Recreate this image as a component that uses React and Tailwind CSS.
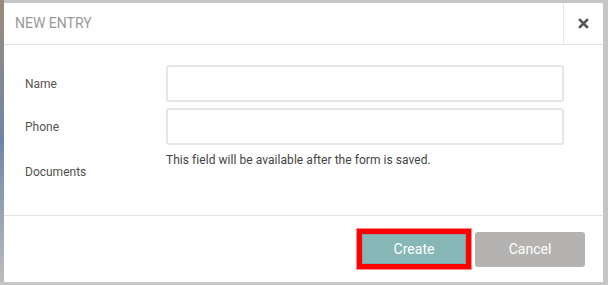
import React from "react";

const Field = ({ label }) => (
  <div className="flex items-center">
    <label className="w-[141px] shrink-0 text-[12px] text-[#555]">{label}</label>
    <input
      type="text"
      className="w-[398px] h-[37px] border-2 border-[#e6e6e6] rounded-[3px] bg-white outline-none px-2"
    />
  </div>
);

const App = () => {
  return (
    <div
      className="w-[608px] h-[285px] bg-[#c6c6c6] flex pt-[3px] overflow-hidden"
      style={{ fontFamily: "Roboto, 'Liberation Sans', sans-serif" }}
    >
      {/* sliver of the page behind the modal */}
      <div className="w-[4px] h-[282px] -mt-[3px] bg-gradient-to-b from-[#9b8a78] via-[#6d87a8] to-[#bdbdbd]" />

      <div className="w-[599px] h-[279px] bg-white flex flex-col">
        {/* header */}
        <div className="h-[42px] flex items-stretch justify-between border-b border-[#e2e2e2]">
          <h3 className="pl-[11px] flex items-center text-[14px] text-[#999]">NEW ENTRY</h3>
          <button className="w-[40px] flex items-center justify-center border-l border-[#e6e6e6]">
            <svg width="11" height="11" viewBox="0 0 11 11">
              <path d="M2 2 L9 9 M9 2 L2 9" stroke="#555" strokeWidth="2.6" strokeLinecap="square" />
            </svg>
          </button>
        </div>

        {/* body */}
        <div className="flex-1 pt-[20px] pl-[21px] flex flex-col gap-[6px] border-b border-[#e2e2e2]">
          <Field label="Name" />
          <Field label="Phone" />
          <div className="flex">
            <span className="w-[141px] shrink-0 text-[12px] text-[#4f4f4f] pt-[12px]">Documents</span>
            <p className="text-[12px] text-[#444] tracking-[0.05px]">
              This field will be available after the form is saved.
            </p>
          </div>
        </div>

        {/* footer */}
        <div className="h-[66px] flex items-center justify-end gap-[4px] pr-[18px]">
          <div className="w-[114px] h-[40px] border-[5px] border-[#ff0000] shadow-[0_0_0_1px_#ff8a8a]">
            <button className="w-full h-full bg-[#86b6b5] text-white text-[14px] border border-[#7aa8a7]">
              Create
            </button>
          </div>
          <button className="w-[110px] h-[35px] rounded-[3px] bg-[#b4b3b1] text-white text-[14px]">
            Cancel
          </button>
        </div>
      </div>
    </div>
  );
};

export default App;
